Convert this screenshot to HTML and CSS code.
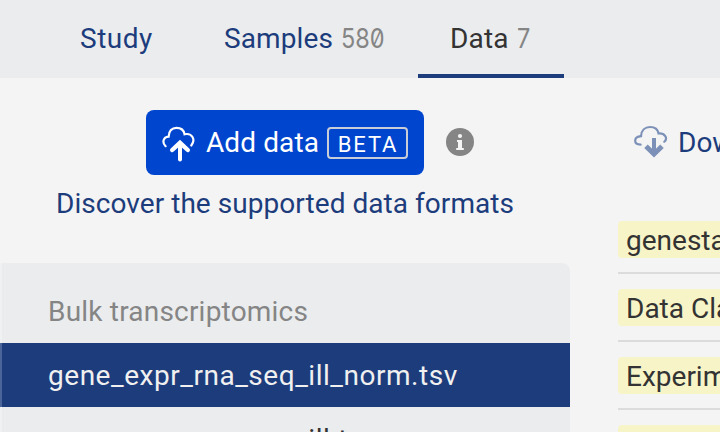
FILE: index.html
```html
<!DOCTYPE html>
<html lang="en">
<head>
<meta charset="utf-8">
<title>Study data</title>
<link rel="stylesheet" href="styles.css">
</head>
<body>
<nav class="tabs">
  <a class="tab tab-study">Study</a>
  <a class="tab tab-samples">Samples <span class="count">580</span></a>
  <a class="tab tab-data active">Data <span class="count">7</span></a>
</nav>
<main class="content">
  <section class="left">
    <div class="actions">
      <button class="add">
        <svg class="cloud" width="34" height="38" viewBox="0 0 34 38" fill="none" stroke="currentColor">
          <path stroke-width="2.2" stroke-linecap="round" d="M3.6 22.2C-.1 18.6 1 13.2 6.6 12.7C6.8 7 10 3.8 14.4 3.8C18.8 3.8 22 6.4 22.6 10.3C29.8 8.6 34.1 15.5 29.3 21.5"/>
          <path stroke-width="4" stroke-linecap="round" d="M18 35.5V20"/>
          <path stroke-width="4.4" stroke-linecap="round" d="M10.2 26L18 18.8L25.8 26"/>
        </svg>
        <span class="add-label">Add data</span>
        <span class="beta">BETA</span>
      </button>
      <svg class="info" width="28" height="28" viewBox="0 0 28 28">
        <circle cx="14" cy="14" r="14" fill="#858585"/>
        <circle cx="14" cy="8" r="2.1" fill="#f4f4f4"/>
        <path fill="#f4f4f4" d="M11 12h5v8h1.8v2h-7.6v-2H12v-6h-1z"/>
      </svg>
    </div>
    <a class="formats">Discover the supported data formats</a>
    <div class="files">
      <div class="group">Bulk transcriptomics</div>
      <div class="file selected">gene_expr_rna_seq_ill_norm.tsv</div>
      <div class="file">gene_expr_rna_seq_ill.tsv</div>
    </div>
  </section>
  <section class="right">
    <a class="download">
      <svg class="cloud" width="34" height="34" viewBox="0 0 34 34" fill="none" stroke="#7d91b8">
        <path stroke-width="2.2" stroke-linecap="round" d="M6.6 19.6C-.6 19.4-.8 12 7 11.2C7.3 5.4 10.8 2 16.1 2C20.8 2 23.9 4.6 24.6 8.5C30.8 8 34.2 13.2 30.3 16.7"/>
        <path stroke-width="4" d="M20 13V29"/>
        <path stroke-width="5" d="M12 21.2L20 29L28 21.2"/>
      </svg>
      <span class="download-label">Download</span>
    </a>
    <div class="field"><span class="key">genestack:accession</span></div>
    <div class="field"><span class="key">Data Class</span></div>
    <div class="field"><span class="key">Experiment</span></div>
    <div class="field"><span class="key">Platform</span></div>
  </section>
</main>
</body>
</html>
```
FILE: styles.css
```css
* { box-sizing: border-box; }
html, body { height: 100%; }
body {
  margin: 0;
  overflow: hidden;
  background: #f4f4f4;
  color: #333;
  font: 28px/36px Roboto, sans-serif;
  letter-spacing: 0.5px;
  white-space: nowrap;
}
.tabs {
  display: flex;
  height: 78px;
  padding-left: 48px;
  background: #ebecee;
  color: #1c3c7c;
}
.tab { display: flex; padding: 21px 32px 0; height: 78px; }
.tab-study { width: 144px; }
.tab-samples { width: 226px; letter-spacing: 0.1px; }
.tab-data { width: 146px; letter-spacing: 0.2px; }
.active { color: #333; border-bottom: 4px solid #1c3c7c; }
.count {
  margin-left: 8px;
  font: 500 27px/36px Inter, sans-serif;
  font-weight: 400;
  font-feature-settings: "zero";
  letter-spacing: 0;
  color: #858585;
  transform: scaleX(0.87);
  transform-origin: left;
}
.content { display: flex; height: 354px; overflow: hidden; }
.left { flex: 0 0 570px; padding-top: 32px; }
.actions { display: flex; align-items: center; padding-left: 146px; gap: 22px; }
.add {
  display: flex;
  align-items: center;
  width: 278px;
  height: 65px;
  padding: 0 0 0 16px;
  border: 0;
  border-radius: 8px;
  background: #0045ce;
  color: #fff;
  font: inherit;
  letter-spacing: inherit;
}
.cloud { flex: none; }
.add .cloud { margin-right: 10px; }
.info { margin-bottom: 1px; }
.add-label { width: 121px; text-align: left; letter-spacing: 0.1px; }
.beta {
  width: 81px;
  height: 32px;
  border: 2px solid #c8cdd8;
  border-radius: 4px;
  font-size: 22px;
  line-height: 31px;
  letter-spacing: 1.8px;
  text-indent: 1px;
}
.formats { display: block; margin: 11px 0 0 56px; color: #1c3c7c; letter-spacing: 0.05px; }
.files {
  height: 169px;
  overflow: hidden;
  margin-top: 41px;
  border-radius: 0 8px 0 0;
  background: #ebecee;
  box-shadow: inset 2px 0 #f0f1f2;
}
.group { height: 80px; padding: 31px 0 0 48px; color: #858585; letter-spacing: 0.2px; }
.file { height: 64px; padding: 15px 0 0 48px; letter-spacing: 0.53px; }
.selected { background: #1c3c7c; color: #f0f0f0; box-shadow: inset 2px 0 #4b659a; }
.right { flex: 1; min-width: 0; padding: 47px 0 0 48px; overflow: hidden; }
.download { display: flex; height: 34px; margin: 0 0 62px 16px; color: #1c3c7c; letter-spacing: 0; }
.download-label { margin-left: 10px; }
.field { height: 68px; }
.field::after { content: ""; display: block; width: 102px; height: 2px; margin-top: 14px; background: #dcdcdc; }
.key {
  display: block;
  width: 300px;
  height: 37px;
  padding: 2px 0 0 8px;
  line-height: 35px;
  letter-spacing: 0;
  border-radius: 4px;
  background: #f7f4c8;
}
```
